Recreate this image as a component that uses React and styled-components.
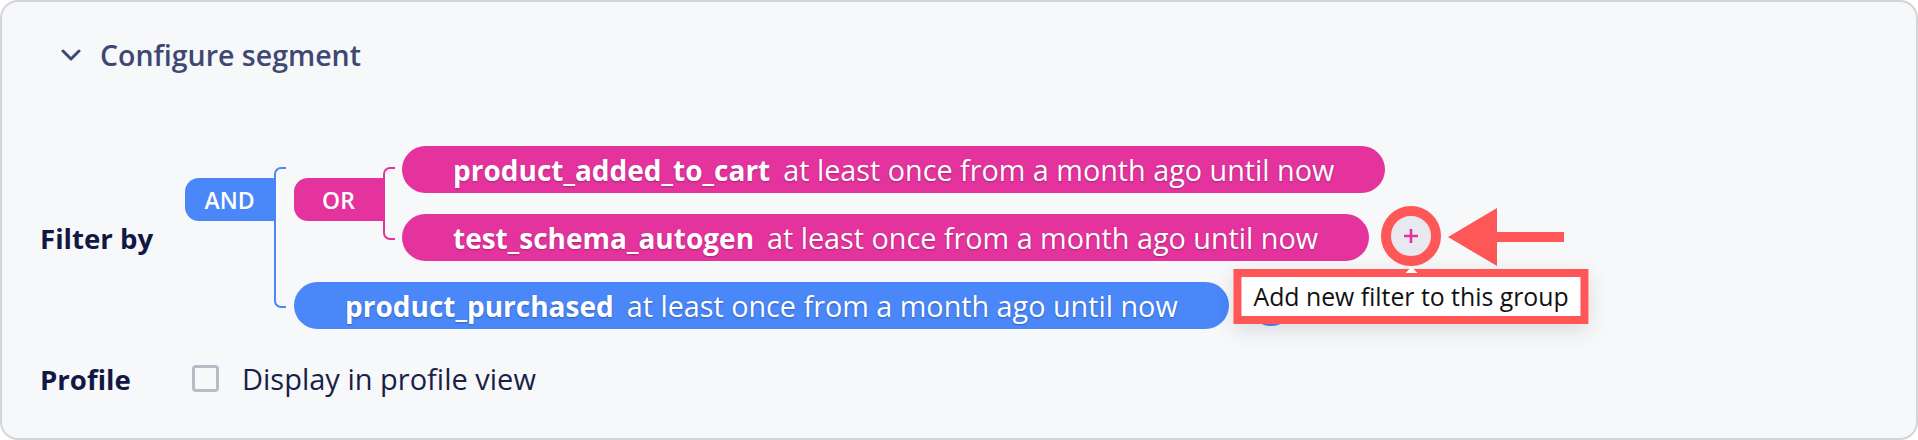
import styled, { createGlobalStyle, css } from 'styled-components';

const PINK = '#e5339e';
const BLUE = '#4a87f8';
const RED = '#ff5757';

const GlobalStyle = createGlobalStyle`
  html, body {
    margin: 0;
    padding: 0;
    background: #ffffff;
  }
  body {
    font-family: "Open Sans", "Noto Sans", sans-serif;
  }
`;

const Card = styled.div`
  box-sizing: border-box;
  width: 1918px;
  height: 440px;
  border: 2px solid #d4d5d9;
  border-radius: 18px;
  background: #f7f8fa;
  padding: 33px 38px 0 38px;
`;

const Header = styled.div`
  display: flex;
  align-items: center;
  gap: 19px;
  height: 40px;
  padding-left: 21px;
  color: #3e4873;
  font-size: 28.5px;
  font-weight: 600;
`;

const Chevron = () => (
  <svg width="20" height="12" viewBox="0 0 20 12" fill="none">
    <polyline points="2,2 10,10 18,2" stroke="#3e4873" strokeWidth="3" strokeLinecap="round" strokeLinejoin="round" />
  </svg>
);

const Row = styled.div`
  display: grid;
  grid-template-columns: 145px 1fr;
  align-items: center;
  margin-top: ${(p) => p.$top}px;
`;

const Label = styled.div`
  color: #121843;
  font-size: 27.6px;
  font-weight: 700;
`;

const Group = styled.div`
  display: flex;
  align-items: flex-start;
`;

const GroupTag = styled.div`
  box-sizing: border-box;
  width: 89px;
  height: 43px;
  margin-top: 32px;
  margin-right: ${(p) => p.$gap || 20}px;
  border-radius: 14px 0 0 14px;
  background: ${(p) => p.$color};
  color: #ffffff;
  font-size: 23px;
  font-weight: 600;
  display: flex;
  align-items: center;
  justify-content: center;
  flex-shrink: 0;
`;

const Children = styled.div`
  position: relative;
  display: flex;
  flex-direction: column;
  align-items: flex-start;
  gap: 21px;

  &::before {
    content: '';
    position: absolute;
    left: -${(p) => p.$gap || 20}px;
    top: 21px;
    bottom: 21px;
    width: 10px;
    border: 2px solid ${(p) => p.$color};
    border-right: none;
    border-radius: 7px 0 0 7px;
  }
`;

const ItemRow = styled.div`
  display: flex;
  align-items: center;
  gap: 22px;
`;

const Pill = styled.div`
  height: 47px;
  padding: 0 51px;
  border-radius: 24px;
  background: ${(p) => p.$color};
  color: #ffffff;
  font-size: 28.75px;
  display: flex;
  align-items: center;
  white-space: nowrap;
  text-shadow: 0 1px 2px rgba(0, 0, 0, 0.28);
`;

const EventName = styled.span`
  font-size: 28px;
  font-weight: 700;
  margin-right: 13px;
`;

const AddWrap = styled.div`
  position: relative;
  width: 40px;
  height: 40px;
  flex-shrink: 0;
  margin-top: ${(p) => p.$shift || 0}px;
`;

const AddButton = styled.div`
  box-sizing: border-box;
  width: 40px;
  height: 40px;
  border-radius: 50%;
  display: flex;
  align-items: center;
  justify-content: center;
  ${(p) =>
    p.$active
      ? css`
          background: #e8e9ef;
          box-shadow: 0 2px 14px rgba(0, 0, 0, 0.12);
          &::after {
            content: '';
            position: absolute;
            inset: -10px;
            border: 10px solid ${RED};
            border-radius: 50%;
          }
        `
      : css`
          background: #f7f8fa;
          border: 2px solid ${p.$color};
        `}
`;

const Plus = ({ color }) => (
  <svg width="16" height="16" viewBox="0 0 16 16">
    <path d="M8 1v14M1 8h14" stroke={color} strokeWidth="2.6" />
  </svg>
);

const Arrow = styled.svg`
  position: absolute;
  left: 57px;
  top: -8px;
`;

const Tooltip = styled.div`
  position: absolute;
  z-index: 5;
  top: calc(100% + 13px);
  left: 50%;
  transform: translateX(-50%);
  box-sizing: border-box;
  height: 55px;
  padding: 0 12px;
  border: 8px solid ${RED};
  background: #ffffff;
  box-shadow: 0 6px 22px rgba(0, 0, 0, 0.12);
  color: #111111;
  font-size: 24.8px;
  line-height: 39px;
  white-space: nowrap;

  &::before {
    content: '';
    position: absolute;
    top: -16px;
    left: 50%;
    transform: translateX(-50%);
    border: 6px solid transparent;
    border-bottom-color: #ffffff;
  }
`;

const ProfileOption = styled.label`
  display: flex;
  align-items: center;
  gap: 23px;
  margin-left: 7px;
  color: #1a1f48;
  font-size: 29px;
`;

const Checkbox = styled.span`
  box-sizing: border-box;
  width: 27px;
  height: 27px;
  border: 3px solid #b9bac8;
  border-radius: 4px;
  background: #f7f8fa;
`;

const when = 'at least once from a month ago until now';

const Event = ({ name, color }) => (
  <Pill $color={color}>
    <EventName>{name}</EventName>
    {when}
  </Pill>
);

export default function App() {
  return (
    <>
      <GlobalStyle />
      <Card>
        <Header>
          <Chevron />
          Configure segment
        </Header>

        <Row $top={71}>
          <Label>Filter by</Label>
          <Group>
            <GroupTag $color={BLUE}>AND</GroupTag>
            <Children $color={BLUE}>
              <Group>
                <GroupTag $color={PINK} $gap={19}>OR</GroupTag>
                <Children $color={PINK} $gap={19}>
                  <Event name="product_added_to_cart" color={PINK} />
                  <ItemRow>
                    <Event name="test_schema_autogen" color={PINK} />
                    <AddWrap $shift={-4}>
                      <AddButton $active>
                        <Plus color={PINK} />
                      </AddButton>
                      <Arrow width="116" height="58" viewBox="0 0 116 58">
                        <polygon points="0,29 49,0 49,24 116,24 116,34 49,34 49,58" fill={RED} />
                      </Arrow>
                      <Tooltip>Add new filter to this group</Tooltip>
                    </AddWrap>
                  </ItemRow>
                </Children>
              </Group>
              <ItemRow>
                <Event name="product_purchased" color={BLUE} />
                <AddWrap>
                  <AddButton $color={BLUE}>
                    <Plus color={BLUE} />
                  </AddButton>
                </AddWrap>
              </ItemRow>
            </Children>
          </Group>
        </Row>

        <Row $top={30}>
          <Label>Profile</Label>
          <ProfileOption>
            <Checkbox />
            Display in profile view
          </ProfileOption>
        </Row>
      </Card>
    </>
  );
}
